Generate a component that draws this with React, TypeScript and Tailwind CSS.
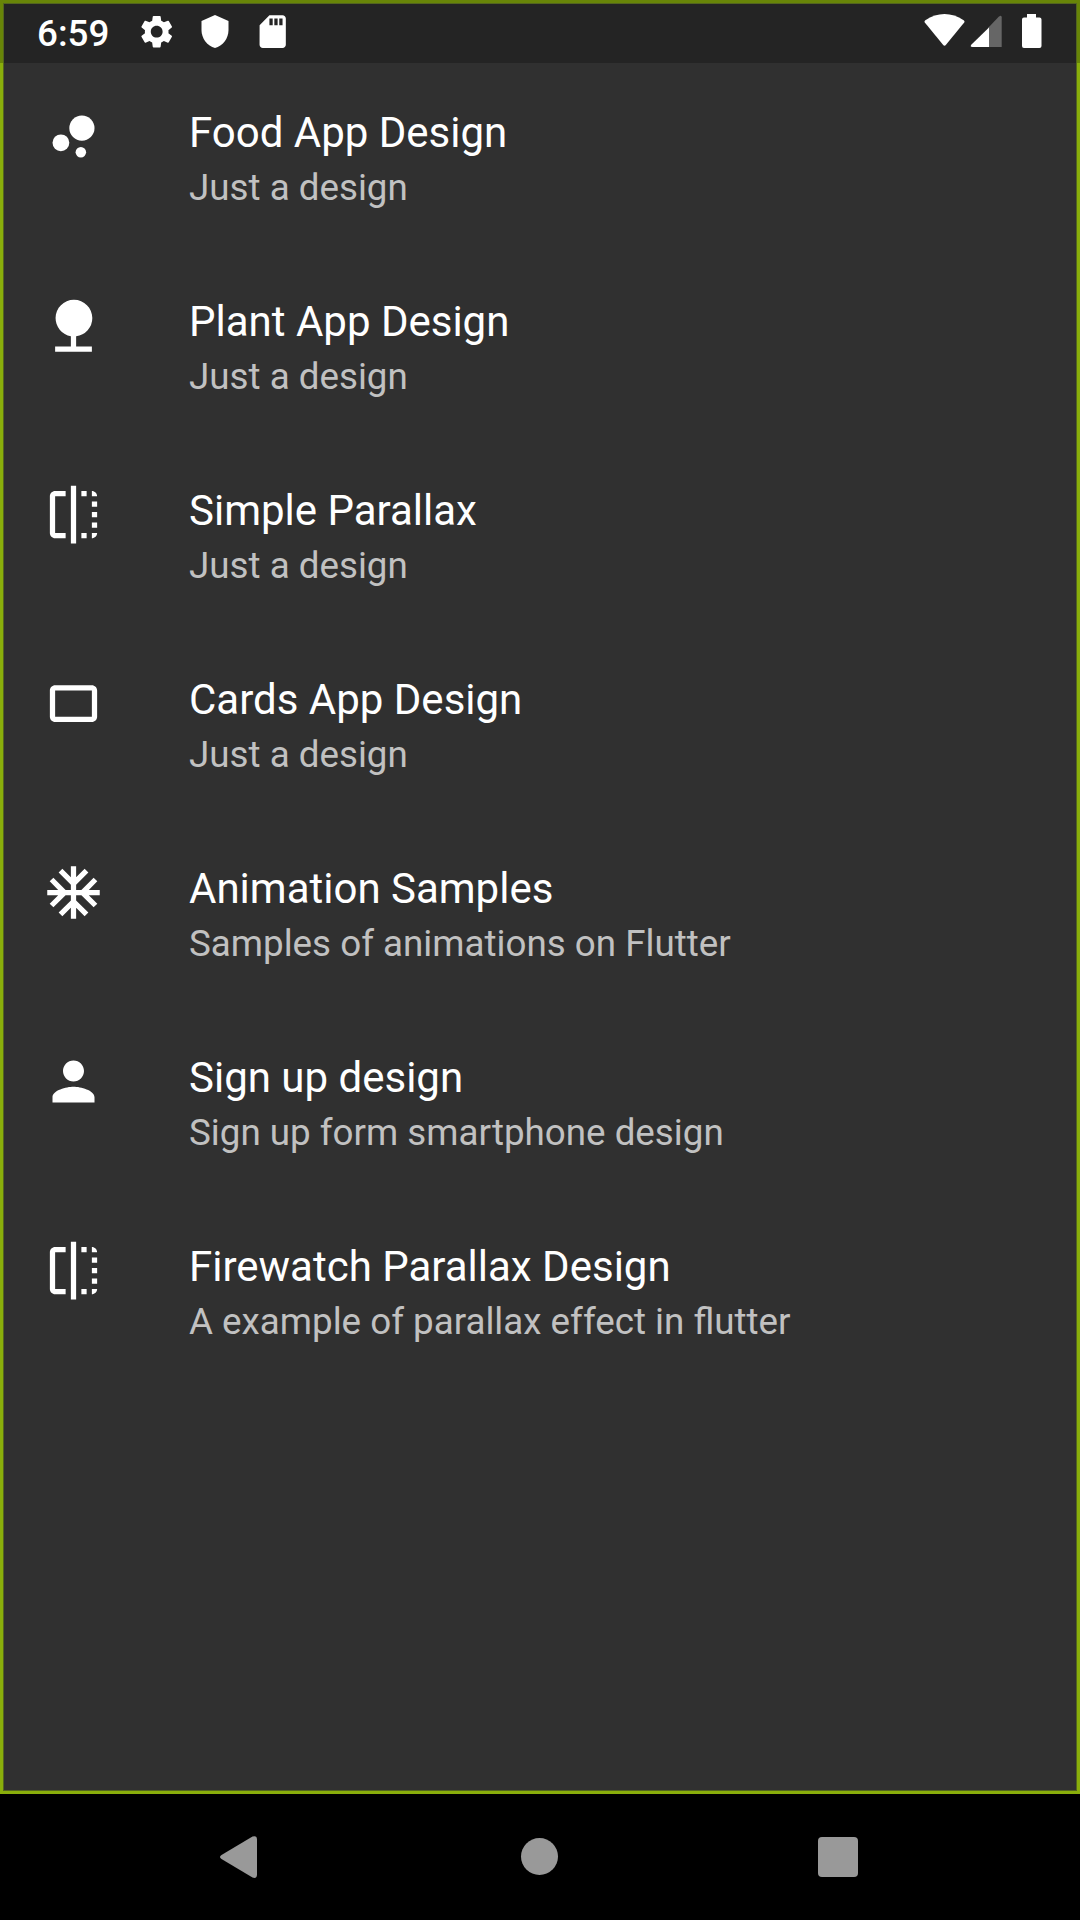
import React from "react";
import type { IconType } from "react-icons";
import { MdBubbleChart, MdNature, MdFlip, MdCropLandscape, MdAcUnit, MdPerson, MdSettings, MdSdCard } from "react-icons/md";

const items: { icon: IconType; title: string; subtitle: string }[] = [
  { icon: MdBubbleChart, title: "Food App Design", subtitle: "Just a design" },
  { icon: MdNature, title: "Plant App Design", subtitle: "Just a design" },
  { icon: MdFlip, title: "Simple Parallax", subtitle: "Just a design" },
  { icon: MdCropLandscape, title: "Cards App Design", subtitle: "Just a design" },
  { icon: MdAcUnit, title: "Animation Samples", subtitle: "Samples of animations on Flutter" },
  { icon: MdPerson, title: "Sign up design", subtitle: "Sign up form smartphone design" },
  { icon: MdFlip, title: "Firewatch Parallax Design", subtitle: "A example of parallax effect in flutter" },
];

function StatusBar() {
  return (
    <header className="flex h-[63px] items-center justify-between bg-[#242424] pr-[38px] pl-[37px] text-white">
      <div className="flex items-center">
        <span className="w-[100px] pt-[3px] text-[36.75px] leading-[43px] font-medium">6:59</span>
        <MdSettings className="size-[39.4px]" />
        <svg className="ml-[25px] h-[33px] w-[28px]" viewBox="0 0 28 33" fill="currentColor">
          <path d="M14 0 27.5 6V15C27.5 23.5 21.7 31 14 33C6.300 31 .5 23.500 .5 15V6Z" />
        </svg>
        <MdSdCard className="ml-[24px] size-[39.4px]" />
      </div>
      <div className="flex items-center">
        <svg className="h-[35px] w-[118px]" viewBox="0 0 118 35" fill="currentColor">
          <path d="M.8 8.500Q0 7.300 1.300 6.300C13.500-2.100 27.500-2.100 39.700 6.300Q41 7.300 40.200 8.500L22 30.800Q20.500 32.500 19 30.800Z" />
          <path fill="#666" d="M64 14 74.700 2.800Q77.700.500 77.700 3.500V33H64Z" />
          <path d="M65 13.500V33H48.500Q45.500 33 47.500 30.500Z" />
          <path d="M103 0H112V3.500H115.500Q117.500 3.500 117.500 5.500V32Q117.500 34 115.500 34H100Q98 34 98 32V5.500Q98 3.500 100 3.500H103Z" />
        </svg>
      </div>
    </header>
  );
}

function NavigationBar() {
  return (
    <nav className="flex h-[126px] items-center justify-between bg-black pr-[222px] pl-[219px] text-[#999]">
      <svg className="h-[44px] w-[39px]" viewBox="0 0 39 44" fill="currentColor">
        <path d="M2.500 20 33.500 1.500Q38 0 38 4.500V39.500Q38 44 33.500 42.500L2.500 24Q-.5 22 2.500 20Z" />
      </svg>
      <div className="mb-[1px] ml-[2px] size-[37px] rounded-full bg-[#999]" />
      <div className="size-[40px] rounded-[4px] bg-[#999]" />
    </nav>
  );
}

export default function App() {
  return (
    <div className="flex h-[1920px] w-[1080px] flex-col overflow-hidden bg-[#303030] font-['Roboto',sans-serif]">
      <div className="relative flex-1">
        <StatusBar />
        <main>
          {items.map(({ icon: Icon, title, subtitle }) => (
            <div key={title} className="flex h-[189px] gap-[84px] px-[42px] pt-[42px] text-white">
              <Icon className="size-[63px] shrink-0" />
              <div className="whitespace-nowrap">
                <h2 className="mt-[3px] text-[42px] leading-[50px] font-normal">{title}</h2>
                <p className="mt-[8px] text-[36.75px] leading-[43px] text-[#c1c1c1]">{subtitle}</p>
              </div>
            </div>
          ))}
        </main>
        <div className="pointer-events-none absolute inset-0 border-[3px] border-[#89ae0b]" />
        <div className="pointer-events-none absolute inset-[3px] border border-[#53651f]" />
        <div className="pointer-events-none absolute inset-x-0 top-0 h-[63px] border-x-[3px] border-t-[3px] border-[#688508]" />
      </div>
      <NavigationBar />
    </div>
  );
}
